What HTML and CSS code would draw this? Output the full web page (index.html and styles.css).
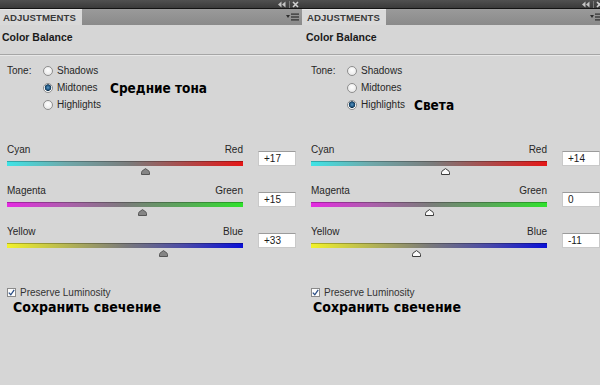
FILE: index.html
```html
<!DOCTYPE html>
<html lang="ru">
<head>
  <meta charset="UTF-8" />
  <title>Color Balance</title>
  <link rel="stylesheet" href="styles.css">
</head>
<body>
  <div class="panels">

    <section class="panel">
      <div class="titlebar">
        <svg class="bar-icons" width="22" height="7" viewBox="0 0 22 7">
          <polygon points="0,3.5 3.5,0.5 3.5,6.5" fill="#c4c4c4" />
          <polygon points="4,3.5 7.5,0.5 7.5,6.5" fill="#c4c4c4" />
          <rect x="11" y="0" width="1" height="7" fill="#7a7a7a" />
          <path d="M15 1 L20 6 M20 1 L15 6" stroke="#d0d0d0" stroke-width="1.6" />
        </svg>
      </div>
      <div class="tabs">
        <div class="tab">ADJUSTMENTS</div>
        <svg class="menu" width="13" height="8" viewBox="0 0 13 8">
          <polygon points="0,2 4,2 2,5" fill="#2e2e2e" />
          <rect x="5" y="0.5" width="8" height="1.2" fill="#2e2e2e" />
          <rect x="5" y="3.4" width="8" height="1.2" fill="#2e2e2e" />
          <rect x="5" y="6.3" width="8" height="1.2" fill="#2e2e2e" />
        </svg>
      </div>
      <div class="title">Color Balance</div>

      <div class="tone">
        <span class="tone-label">Tone:</span>
        <div class="radios">
          <div class="radio-row"><span class="radio"></span><span class="radio-text">Shadows</span></div>
          <div class="radio-row"><span class="radio on"></span><span class="radio-text">Midtones</span><span class="note">Средние тона</span></div>
          <div class="radio-row"><span class="radio"></span><span class="radio-text">Highlights</span></div>
        </div>
      </div>

      <div class="sliders">
        <div class="slider">
          <div class="slider-main">
            <div class="ends"><span>Cyan</span><span>Red</span></div>
            <div class="track cyan-red"></div>
            <div class="thumbs">
              <svg class="thumb" style="left: 58.5%" width="9" height="7" viewBox="0 0 9 7"><path d="M0.5 6.5 V4.6 Q0.5 3.1 2 2.4 L4.5 0.6 L7 2.4 Q8.5 3.1 8.5 4.6 V6.5 Z" /></svg>
            </div>
          </div>
          <div class="value">+17</div>
        </div>
        <div class="slider">
          <div class="slider-main">
            <div class="ends"><span>Magenta</span><span>Green</span></div>
            <div class="track magenta-green"></div>
            <div class="thumbs">
              <svg class="thumb" style="left: 57.5%" width="9" height="7" viewBox="0 0 9 7"><path d="M0.5 6.5 V4.6 Q0.5 3.1 2 2.4 L4.5 0.6 L7 2.4 Q8.5 3.1 8.5 4.6 V6.5 Z" /></svg>
            </div>
          </div>
          <div class="value">+15</div>
        </div>
        <div class="slider">
          <div class="slider-main">
            <div class="ends"><span>Yellow</span><span>Blue</span></div>
            <div class="track yellow-blue"></div>
            <div class="thumbs">
              <svg class="thumb" style="left: 66.5%" width="9" height="7" viewBox="0 0 9 7"><path d="M0.5 6.5 V4.6 Q0.5 3.1 2 2.4 L4.5 0.6 L7 2.4 Q8.5 3.1 8.5 4.6 V6.5 Z" /></svg>
            </div>
          </div>
          <div class="value">+33</div>
        </div>
      </div>

      <div class="check">
        <span class="box"><svg width="7" height="7" viewBox="0 0 7 7"><path d="M0.8 3.6 L2.8 5.8 L6.2 0.8" fill="none" stroke="#2c4f86" stroke-width="1.3" /></svg></span>
        Preserve Luminosity
      </div>
      <div class="note big">Сохранить свечение</div>
    </section>

    <section class="panel">
      <div class="titlebar">
        <svg class="bar-icons" width="22" height="7" viewBox="0 0 22 7">
          <polygon points="0,3.5 3.5,0.5 3.5,6.5" fill="#c4c4c4" />
          <polygon points="4,3.5 7.5,0.5 7.5,6.5" fill="#c4c4c4" />
          <rect x="11" y="0" width="1" height="7" fill="#7a7a7a" />
          <path d="M15 1 L20 6 M20 1 L15 6" stroke="#d0d0d0" stroke-width="1.6" />
        </svg>
      </div>
      <div class="tabs">
        <div class="tab">ADJUSTMENTS</div>
        <svg class="menu" width="13" height="8" viewBox="0 0 13 8">
          <polygon points="0,2 4,2 2,5" fill="#2e2e2e" />
          <rect x="5" y="0.5" width="8" height="1.2" fill="#2e2e2e" />
          <rect x="5" y="3.4" width="8" height="1.2" fill="#2e2e2e" />
          <rect x="5" y="6.3" width="8" height="1.2" fill="#2e2e2e" />
        </svg>
      </div>
      <div class="title">Color Balance</div>

      <div class="tone">
        <span class="tone-label">Tone:</span>
        <div class="radios">
          <div class="radio-row"><span class="radio"></span><span class="radio-text">Shadows</span></div>
          <div class="radio-row"><span class="radio"></span><span class="radio-text">Midtones</span></div>
          <div class="radio-row"><span class="radio on"></span><span class="radio-text">Highlights</span><span class="note">Света</span></div>
        </div>
      </div>

      <div class="sliders hollow">
        <div class="slider">
          <div class="slider-main">
            <div class="ends"><span>Cyan</span><span>Red</span></div>
            <div class="track cyan-red"></div>
            <div class="thumbs">
              <svg class="thumb" style="left: 57%" width="9" height="7" viewBox="0 0 9 7"><path d="M0.5 6.5 V4.6 Q0.5 3.1 2 2.4 L4.5 0.6 L7 2.4 Q8.5 3.1 8.5 4.6 V6.5 Z" /></svg>
            </div>
          </div>
          <div class="value">+14</div>
        </div>
        <div class="slider">
          <div class="slider-main">
            <div class="ends"><span>Magenta</span><span>Green</span></div>
            <div class="track magenta-green"></div>
            <div class="thumbs">
              <svg class="thumb" style="left: 50%" width="9" height="7" viewBox="0 0 9 7"><path d="M0.5 6.5 V4.6 Q0.5 3.1 2 2.4 L4.5 0.6 L7 2.4 Q8.5 3.1 8.5 4.6 V6.5 Z" /></svg>
            </div>
          </div>
          <div class="value">0</div>
        </div>
        <div class="slider">
          <div class="slider-main">
            <div class="ends"><span>Yellow</span><span>Blue</span></div>
            <div class="track yellow-blue"></div>
            <div class="thumbs">
              <svg class="thumb" style="left: 44.5%" width="9" height="7" viewBox="0 0 9 7"><path d="M0.5 6.5 V4.6 Q0.5 3.1 2 2.4 L4.5 0.6 L7 2.4 Q8.5 3.1 8.5 4.6 V6.5 Z" /></svg>
            </div>
          </div>
          <div class="value">-11</div>
        </div>
      </div>

      <div class="check">
        <span class="box"><svg width="7" height="7" viewBox="0 0 7 7"><path d="M0.8 3.6 L2.8 5.8 L6.2 0.8" fill="none" stroke="#2c4f86" stroke-width="1.3" /></svg></span>
        Preserve Luminosity
      </div>
      <div class="note big tight">Сохранить свечение</div>
    </section>

  </div>
</body>
</html>
```

FILE: styles.css
```css
  :root {
    --panel-bg: #d6d6d6;
    --text: #262626;
  }

  body {
    margin: 0;
    background: var(--panel-bg);
    font-family: 'Liberation Sans', Arial, sans-serif;
    font-size: 10px;
    color: var(--text);
    overflow: hidden;
  }

  .panels {
    display: flex;
    margin-left: -2px;
    width: 608px;
  }

  .panel {
    flex: none;
    width: 304px;
    background: var(--panel-bg);
  }

  /* dark strip on top */
  .titlebar {
    height: 8px;
    background: linear-gradient(#505050, #3a3a3a);
    border-bottom: 1px solid #141414;
    display: flex;
    justify-content: flex-end;
    align-items: center;
    padding-right: 2px;
  }

  .tabs {
    height: 16px;
    background: linear-gradient(#9a9a9a, #8a8a8a);
    display: flex;
    justify-content: space-between;
    align-items: center;
  }

  .tab {
    align-self: stretch;
    width: 79px;
    padding-left: 5px;
    background: #d9d9d9;
    border-top: 1px solid #e6e6e6;
    line-height: 15px;
    font-size: 9.6px;
    font-weight: bold;
    color: #3a3a3a;
    letter-spacing: 0.1px;
  }

  .menu {
    margin-right: 3px;
  }

  .title {
    box-sizing: border-box;
    height: 30px;
    padding-left: 4px;
    line-height: 24px;
    font-size: 10.5px;
    font-weight: bold;
    color: #1a1a1a;
    border-bottom: 1px solid #a6a6a6;
    box-shadow: 0 1px 0 #e8e8e8;
  }

  /* tone radios */
  .tone {
    display: flex;
    padding: 7px 0 0 9px;
  }

  .tone-label {
    width: 36px;
    line-height: 17px;
  }

  .radio-row {
    display: flex;
    align-items: center;
    height: 17px;
  }

  .radio {
    box-sizing: border-box;
    width: 10px;
    height: 10px;
    border-radius: 50%;
    border: 1px solid #8e8e8e;
    background: radial-gradient(circle at 50% 40%, #ffffff, #e2e2e2);
  }

  .radio.on {
    background: radial-gradient(circle at 50% 45%, #5a97c4 0, #1a4e78 2.4px, #0e2f4a 3px, #ffffff 3.6px, #e6e6e6 100%);
  }

  .radio-text {
    width: 46px;
    margin-left: 4px;
  }

  .note {
    margin-left: 7px;
    font-family: 'DejaVu Sans Condensed', 'DejaVu Sans', sans-serif;
    font-weight: bold;
    font-size: 13.5px;
    color: #000;
  }

  /* sliders */
  .sliders {
    padding: 30px 0 0 9px;
  }

  .slider {
    display: flex;
    margin-bottom: 9px;
  }

  .slider-main {
    width: 236px;
  }

  .ends {
    display: flex;
    justify-content: space-between;
    line-height: 14px;
  }

  .track {
    height: 5px;
    margin-top: 4px;
    box-shadow: inset 0 1px 0 rgba(0, 0, 0, 0.25);
  }

  .cyan-red {
    background: linear-gradient(to right, #3ee4e6, #6fa9ab 25%, #7b7b7b 52%, #b24444 78%, #e51616);
  }

  .magenta-green {
    background: linear-gradient(to right, #e52ae2, #ad5ead 25%, #7b7b7b 50%, #58a858 75%, #2fe22c);
  }

  .yellow-blue {
    background: linear-gradient(to right, #f2f22a, #b6b653 25%, #7a7a7a 50%, #4a4aa8 75%, #0a10d6);
  }

  .thumbs {
    position: relative;
    height: 7px;
    margin-top: 2px;
  }

  .thumb {
    position: absolute;
    top: 0;
    margin-left: -4.5px;
    fill: #858585;
    stroke: #555;
    stroke-width: 1;
  }

  .hollow .thumb {
    fill: #fafafa;
    stroke: #3c3c3c;
  }

  .value {
    box-sizing: border-box;
    width: 38px;
    height: 15px;
    margin: 8px 0 0 15px;
    padding-left: 5px;
    line-height: 13px;
    background: #fff;
    border: 1px solid #c9c9c9;
    border-top-color: #9b9b9b;
    color: #1a1a1a;
  }

  /* checkbox */
  .check {
    display: flex;
    align-items: center;
    height: 14px;
    margin-top: 28px;
    padding-left: 9px;
    color: #333;
  }

  .box {
    box-sizing: border-box;
    width: 9px;
    height: 9px;
    margin-right: 4px;
    border: 1px solid #8a8a8a;
    background: #fdfdfd;
    display: flex;
    align-items: center;
    justify-content: center;
  }

  .note.big {
    margin-left: 0;
    padding-left: 15px;
    height: 16px;
    line-height: 16px;
    font-size: 14px;
  }

  .note.big.tight {
    padding-left: 11px;
  }
```
